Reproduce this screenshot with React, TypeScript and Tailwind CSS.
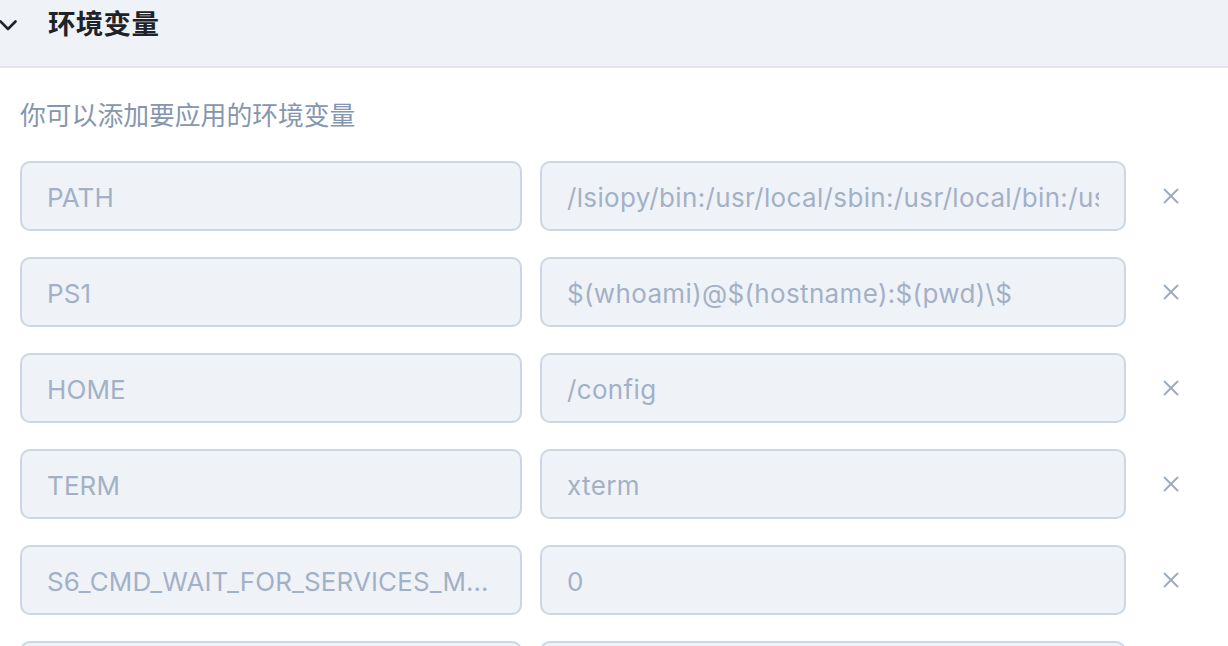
import React from 'react'
import { X } from 'lucide-react'

const envVars = [
  { key: 'PATH', value: '/lsiopy/bin:/usr/local/sbin:/usr/local/bin:/usr/sbin:/usr/bin:/sbin:/bin' },
  { key: 'PS1', value: '$(whoami)@$(hostname):$(pwd)\\$' },
  { key: 'HOME', value: '/config' },
  { key: 'TERM', value: 'xterm' },
  { key: 'S6_CMD_WAIT_FOR_SERVICES_MAXTIME', value: '0' },
  { key: 'VIRTUAL_ENV', value: '/lsiopy' },
]

export default function App() {
  return (
    <div
      className="h-[646px] w-[1228px] overflow-hidden bg-white"
      style={{ fontFamily: 'Inter, "Noto Sans CJK SC", sans-serif' }}
    >
      <div className="flex h-[68px] border-b-2 border-[#e3e5ea] bg-[#eff2f7]">
        <div className="flex h-[50px] items-center">
          <svg width="20" height="12" viewBox="0 0 20 12" className="ml-[-1px] mt-[2px]">
            <polyline points="1.5,1.5 9,9 16.5,1.5" fill="none" stroke="#1f2329" strokeWidth="2.6" strokeLinecap="round" strokeLinejoin="round" />
          </svg>
          <h2 className="ml-[29px] text-[27.5px] font-bold tracking-[0.3px] text-[#1f2329]">环境变量</h2>
        </div>
      </div>

      <div className="pl-5 pt-[31px]">
        <p className="text-[25.8px] leading-[34px] text-[#8596ae]">你可以添加要应用的环境变量</p>

        <div className="mt-[28px] flex flex-col gap-[26px]">
          {envVars.map((env) => (
            <div key={env.key} className="flex items-center">
              <div className="flex h-[70px] w-[502px] items-center rounded-[10px] border-2 border-[#cdd7e3] bg-[#eff3f8] pl-[25px] pr-[20px] pt-[3px]">
                <span className="truncate text-[26px] tracking-[0.1px] text-[#a3b1c6]">{env.key}</span>
              </div>
              <div className="ml-[18px] flex h-[70px] w-[586px] items-center rounded-[10px] border-2 border-[#cdd7e3] bg-[#eff3f8] px-[25px] pt-[3px]">
                <div className="min-w-0 flex-1 overflow-hidden whitespace-nowrap text-[26px] tracking-[0.35px] text-[#a3b1c6]">
                  {env.value}
                </div>
              </div>
              <button className="flex w-[90px] items-center justify-center">
                <X className="h-[26px] w-[26px] text-[#9aabc2]" strokeWidth={1.8} />
              </button>
            </div>
          ))}
        </div>
      </div>
    </div>
  )
}
